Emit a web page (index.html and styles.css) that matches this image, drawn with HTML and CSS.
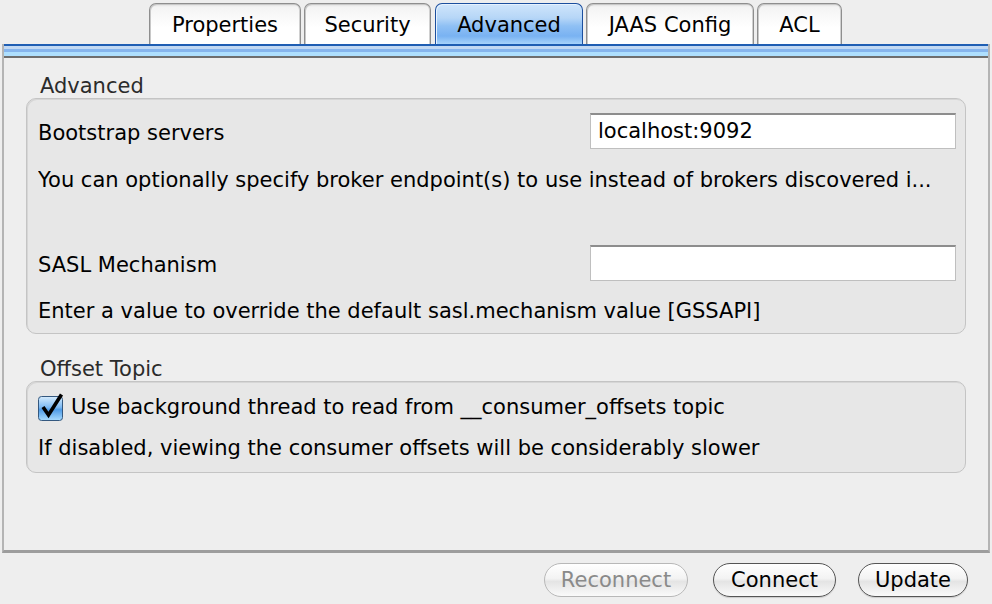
FILE: index.html
```html
<!DOCTYPE html>
<html>
<head>
<meta charset="utf-8">
<link rel="stylesheet" href="styles.css">
</head>
<body>
<div class="window">
  <div class="tabs">
    <div class="tab t-prop">Properties</div>
    <div class="tab t-sec">Security</div>
    <div class="tab t-adv selected">Advanced</div>
    <div class="tab t-jaas">JAAS Config</div>
    <div class="tab t-acl">ACL</div>
  </div>
  <div class="panel">
    <div class="bar"></div>
    <div class="content">
      <div class="group-title">Advanced</div>
      <div class="group g1">
        <div class="row r1"><span class="label">Bootstrap servers</span><div class="field">localhost:9092</div></div>
        <div class="desc d1">You can optionally specify broker endpoint(s) to use instead of brokers discovered i...</div>
        <div class="row r2"><span class="label">SASL Mechanism</span><div class="field"></div></div>
        <div class="desc d2">Enter a value to override the default sasl.mechanism value [GSSAPI]</div>
      </div>
      <div class="group-title t2">Offset Topic</div>
      <div class="group g2">
        <div class="check-row">
          <svg class="checkbox" width="26" height="28" viewBox="0 0 26 28">
            <defs>
              <linearGradient id="cb" x1="0" y1="0" x2="0" y2="1">
                <stop offset="0" stop-color="#d6ecfd"/>
                <stop offset="0.45" stop-color="#7db9f2"/>
                <stop offset="0.55" stop-color="#4f9be6"/>
                <stop offset="1" stop-color="#a9dcff"/>
              </linearGradient>
            </defs>
            <rect x="0.5" y="3.5" width="24" height="24" rx="3" fill="url(#cb)" stroke="#34587f"/>
            <path d="M5 14 L10.5 22 L23.5 1.5" fill="none" stroke="#000" stroke-width="3.6" stroke-linejoin="miter" stroke-linecap="butt"/>
          </svg>
          <span>Use background thread to read from __consumer_offsets topic</span>
        </div>
        <div class="desc d3">If disabled, viewing the consumer offsets will be considerably slower</div>
      </div>
    </div>
  </div>
  <div class="buttons">
    <div class="btn disabled b-rec">Reconnect</div>
    <div class="btn b-con">Connect</div>
    <div class="btn b-upd">Update</div>
  </div>
</div>
</body>
</html>
```
FILE: styles.css
```css
html, body {
  margin: 0;
  padding: 0;
  background: #eeeeee;
}
body {
  font-family: "DejaVu Sans", "Lucida Grande", sans-serif;
  font-size: 21px;
  color: #000;
  width: 992px;
  height: 604px;
  overflow: hidden;
}
.window {
  padding-top: 3px;
}
.tabs {
  display: flex;
  height: 41px;
  padding-left: 149px;
  gap: 3px;
}
.tab {
  box-sizing: border-box;
  height: 41px;
  border: 1px solid #8e8e8e;
  border-bottom: none;
  border-radius: 7px 7px 0 0;
  background: linear-gradient(#dcdcdc 0, #f4f4f4 3px, #ffffff 60%, #ffffff 100%);
  box-shadow: inset 1px 1px 0 #c8c8c8, inset -1px 0 0 #d0d0d0;
  display: flex;
  align-items: center;
  justify-content: center;
  padding-top: 1px;
}
.t-prop { width: 152px; }
.t-sec { width: 127px; }
.t-adv { width: 148px; margin-left: 1px; }
.t-jaas { width: 168px; }
.t-acl { width: 85px; }
.tab.selected {
  border-color: #1c4f9e;
  background: linear-gradient(#cfe5fb 0, #b6d6f7 35%, #8fc0f4 55%, #79b2f2 80%, #a6d3fb 100%);
  box-shadow: inset 1px 1px 0 #e6f2fe;
}
.panel {
  box-sizing: border-box;
  margin-left: 2px;
  width: 988px;
  height: 509px;
  border-left: 2px solid #b4b4b4;
  border-right: 2px solid #b4b4b4;
  border-bottom: 3px solid #9d9d9d;
}
.bar {
  height: 14px;
  background: linear-gradient(
    #1f5eb3 0, #1f5eb3 2px,
    #c2d9f3 2px, #c2d9f3 5px,
    #86b5ed 5px, #86b5ed 8px,
    #aedffe 8px, #aedffe 12px,
    #6e6e6e 12px, #6e6e6e 14px);
}
.content {
  padding: 16px 22px 0 22px;
}
.group-title {
  height: 24px;
  line-height: 24px;
  padding-left: 14px;
  color: #2b2b2b;
}
.group-title.t2 {
  margin-top: 23px;
}
.group {
  box-sizing: border-box;
  border: 1px solid #c4c4c4;
  border-radius: 10px;
  background: #e7e7e7;
  box-shadow: inset 1px 1px 0 #d6d6d6;
  padding: 0 9px 0 11px;
}
.g1 {
  height: 236px;
}
.g2 {
  height: 92px;
}
.row {
  display: flex;
  align-items: center;
  justify-content: space-between;
  height: 36px;
}
.label {
  padding-top: 3px;
}
.r1 { margin-top: 14px; }
.r2 { margin-top: 53px; }
.field {
  box-sizing: border-box;
  width: 366px;
  height: 36px;
  background: #fff;
  border: 1px solid #bfbfbf;
  border-top: 2px solid #8d8d8d;
  padding-left: 7px;
  line-height: 32px;
}
.desc {
  height: 24px;
  line-height: 24px;
  white-space: nowrap;
  overflow: hidden;
}
.d1 { margin-top: 19px; }
.d2 { margin-top: 18px; }
.check-row {
  display: flex;
  align-items: center;
  gap: 7px;
  height: 28px;
  margin-top: 11px;
}
.checkbox {
  display: block;
  flex: none;
}
.d3 { margin-top: 15px; }
.buttons {
  display: flex;
  justify-content: flex-end;
  margin-top: 10px;
  padding-right: 24px;
}
.btn {
  box-sizing: border-box;
  height: 34px;
  border: 1px solid #555;
  border-radius: 17px;
  background: linear-gradient(#ffffff 0, #f3f3f3 45%, #e4e4e4 55%, #fafafa 100%);
  box-shadow: 0 1px 1px rgba(0,0,0,0.15);
  display: flex;
  align-items: center;
  justify-content: center;
  line-height: 1;
}
.btn.disabled {
  border-color: #b8b8b8;
  color: #8a8a8a;
  box-shadow: none;
}
.b-rec { width: 144px; }
.b-con { width: 123px; margin-left: 25px; }
.b-upd { width: 110px; margin-left: 22px; }
```
